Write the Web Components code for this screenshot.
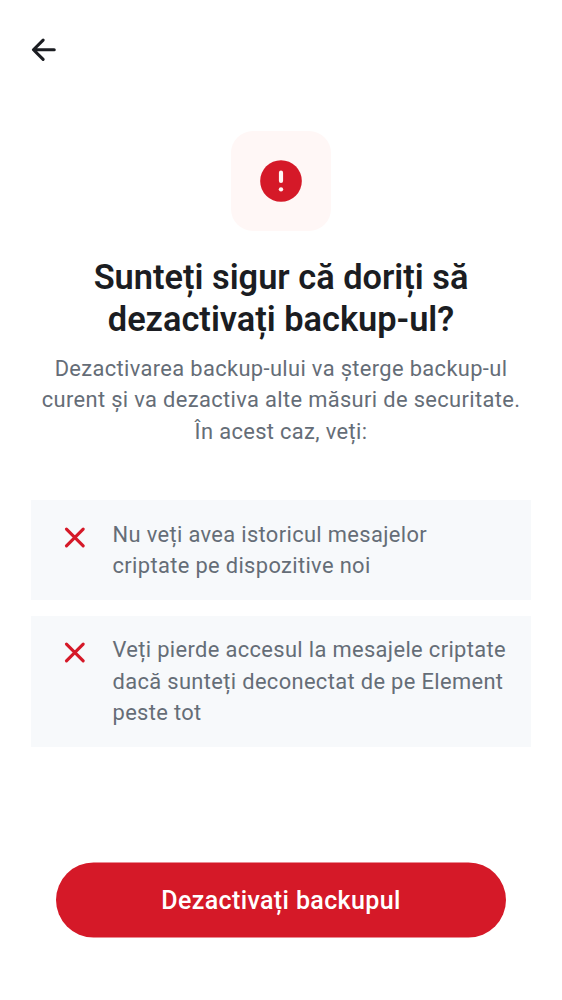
<!DOCTYPE html>
<html lang="ro"><head><meta charset="utf-8"><title>Backup</title>
<style>html,body{margin:0;height:100%;background:#fff}body{font-family:Roboto,sans-serif}</style></head><body>
<backup-screen></backup-screen>
<script>
const define=(name,html)=>customElements.define(name,class extends HTMLElement{
  constructor(){super();this.attachShadow({mode:'open'}).innerHTML=html;}
});
define('top-bar',`<style>:host{display:flex;height:100px;padding-left:25px;box-sizing:border-box;align-items:center}button{border:0;background:none;padding:0;display:flex}svg{display:block}</style>
<button aria-label="Înapoi"><svg width="37.5" height="37.5" viewBox="0 0 24 24" fill="none" stroke="#1b1d22" stroke-width="2" stroke-linecap="round" stroke-linejoin="round"><path d="M18.7 12H5.5M11.6 5.9 5.4 12l6.2 6.2"/></svg></button>`);
define('hero-icon',`<style>:host{display:flex;width:100px;height:100px;border-radius:22px;background:#fff7f6;align-items:center;justify-content:center}</style>
<svg width="50" height="50" viewBox="0 0 24 24"><circle cx="12" cy="12" r="10" fill="#d51928"/><path d="M12 8v4" stroke="#fff7f6" stroke-width="2" stroke-linecap="round"/><circle cx="12" cy="16" r="1.05" fill="#fff7f6"/></svg>`);
define('page-heading',`<style>:host{display:flex;flex-direction:column;align-items:center;text-align:center}h1{margin:25px 0 0;font-size:34.375px;line-height:42.2px;font-weight:600;color:#1b1d22;white-space:nowrap}p{margin:12.6px 0 0;font-size:21.875px;line-height:31.25px;letter-spacing:.36px;color:#656d77;white-space:nowrap}</style>
<hero-icon></hero-icon><h1><slot name="title"></slot></h1><p><slot></slot></p>`);
define('warning-item',`<style>:host{display:flex;background:#f7f9fb;padding:18.85px 0 18.65px 25px;align-items:flex-start}svg{flex:none;margin-right:19px}span{font-size:21.875px;line-height:31.25px;letter-spacing:.36px;color:#656d77;white-space:nowrap}</style>
<svg width="37.5" height="37.5" viewBox="0 0 24 24" fill="none" stroke="#d51928" stroke-width="2" stroke-linecap="round"><path d="m6.7 6.5 10.7 10.7M17.4 6.5 6.7 17.2"/></svg><span><slot></slot></span>`);
define('danger-button',`<style>:host{display:block}button{display:block;width:100%;height:75px;border:0;border-radius:38px;background:#d51928;color:#fff;font:500 25px/37px Roboto,sans-serif;letter-spacing:.38px;padding:0;transform:translateY(.5px)}</style><button><slot></slot></button>`);
define('backup-screen',`<style>:host{display:flex;flex-direction:column;height:1000px;box-sizing:border-box}page-heading{margin-top:31px}.list{display:grid;gap:15.8px;margin:53px 31px 0}danger-button{margin:auto 56px 63px}</style>
<top-bar></top-bar><page-heading><span slot="title">Sunteți sigur că doriți să<br>dezactivați backup-ul?</span>Dezactivarea backup-ului va șterge backup-ul<br>curent și va dezactiva alte măsuri de securitate.<br>În acest caz, veți:</page-heading>
<div class="list"><warning-item>Nu veți avea istoricul mesajelor<br>criptate pe dispozitive noi</warning-item><warning-item>Veți pierde accesul la mesajele criptate<br>dacă sunteți deconectat de pe Element<br>peste tot</warning-item></div>
<danger-button>Dezactivați backupul</danger-button>`);
</script></body></html>
